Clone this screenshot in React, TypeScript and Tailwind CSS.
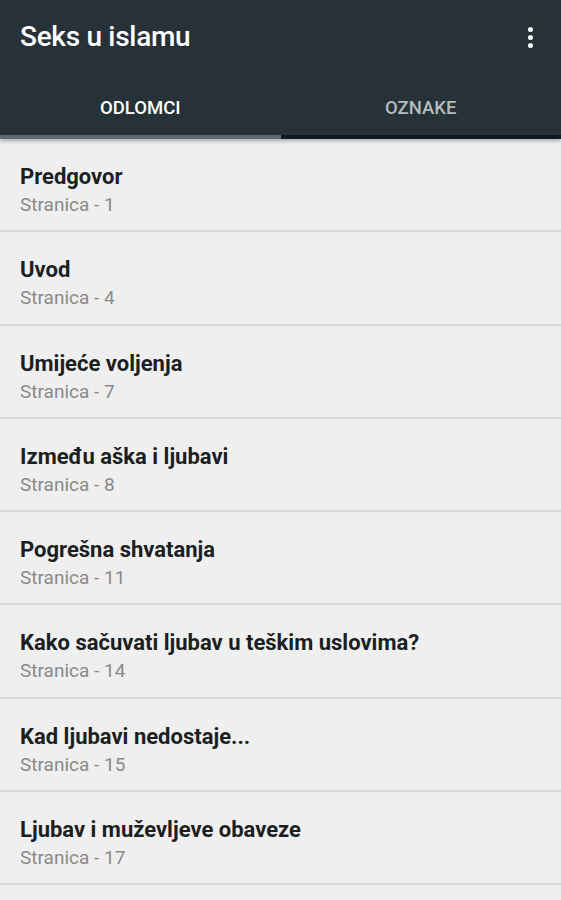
import { useState } from 'react';

const chapters = [
    { title: 'Predgovor', page: 1 },
    { title: 'Uvod', page: 4 },
    { title: 'Umijeće voljenja', page: 7 },
    { title: 'Između aška i ljubavi', page: 8 },
    { title: 'Pogrešna shvatanja', page: 11 },
    { title: 'Kako sačuvati ljubav u teškim uslovima?', page: 14 },
    { title: 'Kad ljubavi nedostaje...', page: 15 },
    { title: 'Ljubav i muževljeve obaveze', page: 17 },
];

export default function App() {
    const [tab, setTab] = useState(0);

    return (
        <div className="w-[561px] h-[900px] overflow-hidden bg-[#efefef] font-['Roboto',sans-serif]">
            {/* App bar */}
            <header className="relative z-10 bg-[#263238] shadow-[0_2px_4px_rgba(0,0,0,0.3)]">
                <div className="h-[74px] flex items-center justify-between pl-5 pr-[19px]">
                    <h1 className="text-[28px] font-medium text-white tracking-[-0.3px]">Seks u islamu</h1>
                    <button className="w-6 h-8 flex flex-col items-center justify-center gap-[3px]">
                        <span className="w-[5px] h-[5px] rounded-full bg-white" />
                        <span className="w-[5px] h-[5px] rounded-full bg-white" />
                        <span className="w-[5px] h-[5px] rounded-full bg-white" />
                    </button>
                </div>

                {/* Tabs */}
                <div className="grid grid-cols-2 h-[65px]">
                    {['ODLOMCI', 'OZNAKE'].map((label, i) => (
                        <button
                            key={label}
                            onClick={() => setTab(i)}
                            className={`flex items-center justify-center pt-2 text-[18.5px] font-medium border-b-[4px] ${
                                tab === i ? 'text-white border-[#5d6a70]' : 'text-[#b4bcbf] border-[#0f1b1f]'
                            }`}
                        >
                            {label}
                        </button>
                    ))}
                </div>
            </header>

            {/* Chapter list */}
            <ul>
                {chapters.map((c) => (
                    <li key={c.title} className="h-[93.3px] flex flex-col pl-5 pt-6 border-b-2 border-[#d9d9d9]">
                        <span className="text-[22px] font-bold text-[#1c1f21] leading-[28px]">{c.title}</span>
                        <span className="mt-px text-[19px] text-[#8a8a8a] leading-[26px]">Stranica - {c.page}</span>
                    </li>
                ))}
            </ul>
        </div>
    );
}
